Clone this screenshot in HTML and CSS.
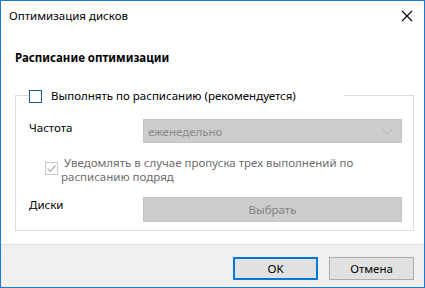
FILE: index.html
```html
<!DOCTYPE html>
<html lang="ru">
<head>
<meta charset="utf-8">
<link rel="stylesheet" href="styles.css">
</head>
<body>
<div class="window">
  <div class="titlebar">
    <span class="title">Оптимизация дисков</span>
    <svg class="close" width="12" height="12" viewBox="0 0 12 12"><path d="M1 1L11 11M11 1L1 11" stroke="#000" stroke-width="1.1" fill="none"/></svg>
  </div>
  <div class="content">
    <div class="heading">Расписание оптимизации</div>
    <div class="group">
      <div class="legend">
        <span class="cb"></span>
        <span class="legend-text">Выполнять по расписанию (рекомендуется)</span>
      </div>
      <div class="row freq">
        <span class="label label-freq">Частота</span>
        <div class="combo">
          <span>еженедельно</span>
          <svg width="12" height="7" viewBox="0 0 12 7"><path d="M1 1L6 6L11 1" stroke="#b4b4b4" stroke-width="1" fill="none"/></svg>
        </div>
      </div>
      <div class="notify">
        <span class="cb cb-disabled"><svg width="11" height="11" viewBox="0 0 11 11"><path d="M1.5 5.5L4.3 8.3L9.5 2.5" stroke="#b0b0b0" stroke-width="1.2" fill="none"/></svg></span>
        <div class="notify-text">
          <div class="line1">Уведомлять в случае пропуска трех выполнений по</div>
          <div>расписанию подряд</div>
        </div>
      </div>
      <div class="row disks">
        <span class="label">Диски</span>
        <div class="btn-disabled">Выбрать</div>
      </div>
    </div>
  </div>
  <div class="footer">
    <div class="btn btn-ok">OK</div>
    <div class="btn">Отмена</div>
  </div>
</div>
</body>
</html>
```
FILE: styles.css
```css
* { box-sizing: border-box; }
html, body { margin: 0; padding: 0; background: #fff; }
body { font-family: "Noto Sans", "Open Sans", sans-serif; font-size: 11.5px; color: #000; }
.window {
  width: 425px; height: 288px;
  border: 1px solid #1d7ad0;
  display: flex; flex-direction: column;
  background: #fff;
}
.titlebar {
  height: 30px; flex: none;
  display: flex; align-items: center; justify-content: space-between;
  padding: 0 10px 0 8px;
}
.title { line-height: 16px; }
.close { display: block; margin-right: 1px; }
.content { flex: 1; padding: 19px 10px 0 14px; }
.heading { font-weight: bold; line-height: 16px; }
.group {
  margin-top: 29px;
  height: 136px;
  border: 1px solid #dcdcdc;
  position: relative;
  padding: 0 10px 0 13px;
}
.legend {
  position: absolute; top: -8px; left: 13px;
  background: #fff;
  display: flex; align-items: center;
  padding-right: 48px;
}
.cb {
  width: 13px; height: 13px; flex: none;
  border: 1px solid #1e5a8c;
  background: #fff;
  display: flex; align-items: center; justify-content: center;
}
.cb-disabled { border-color: #c8c8c8; }
.legend-text { margin-left: 9px; line-height: 16px; }
.row { display: flex; align-items: flex-start; }
.label { width: 114px; flex: none; line-height: 16px; }
.label-freq { margin-top: 1px; }
.freq { margin-top: 23px; }
.combo {
  width: 259px; height: 24px;
  background: #cccccc; border: 1px solid #c4c4c4;
  display: flex; align-items: center; justify-content: space-between;
  padding: 0 8px 0 4px; color: #8a8a8a;
}
.notify { display: flex; align-items: flex-start; margin: 13px 0 0 16px; color: #6d6d6d; line-height: 14px; }
.notify .cb { margin-top: 6px; }
.notify-text { margin-left: 3px; }
.line1 { padding-left: 3px; }
.disks { margin-top: 13px; }
.btn-disabled {
  width: 259px; height: 25px;
  background: #cccccc; border: 1px solid #c4c4c4;
  display: flex; align-items: center; justify-content: center;
  color: #838383;
}
.footer {
  height: 43px; flex: none;
  margin-top: 13px;
  background: #f0f0f0; border-top: 1px solid #dfdfdf;
  display: flex; justify-content: flex-end; align-items: flex-start;
  gap: 11px; padding: 12px 10px 0 0;
}
.btn {
  width: 85px; height: 23px;
  background: #e1e1e1; border: 1px solid #adadad;
  display: flex; align-items: center; justify-content: center;
}
.btn-ok { border: 2px solid #0078d7; }
```
